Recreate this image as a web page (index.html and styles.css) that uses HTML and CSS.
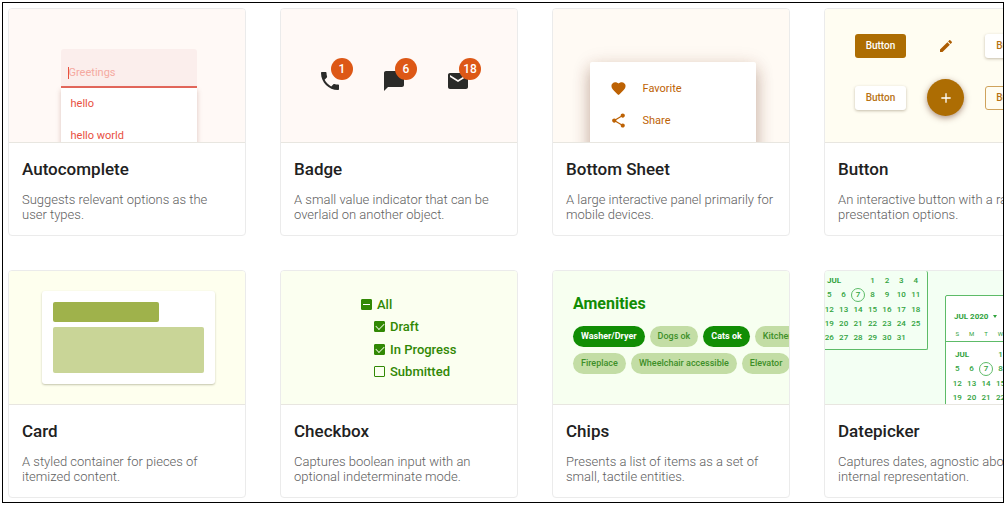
FILE: index.html
```html
<!DOCTYPE html>
<html lang="en">
<head>
<meta charset="utf-8">
<title>Components</title>
<link rel="stylesheet" href="styles.css">
</head>
<body>
<main class="frame">
  <article class="card">
    <div class="preview preview-autocomplete">
      <div class="combo">
        <div class="combo-field"><span class="caret"></span><input class="combo-input" type="text" placeholder="Greetings" aria-label="Greetings"></div>
        <ul class="combo-list"><li>hello</li><li>hello world</li></ul>
      </div>
    </div>
    <div class="info"><h2>Autocomplete</h2><p>Suggests relevant options as the user types.</p></div>
  </article>

  <article class="card">
    <div class="preview preview-badge">
      <span class="badged"><svg viewBox="0 0 24 24"><path d="M6.62 10.79c1.44 2.83 3.76 5.14 6.59 6.59l2.2-2.2c.27-.27.67-.36 1.02-.24 1.12.37 2.33.57 3.57.57.55 0 1 .45 1 1V20c0 .55-.45 1-1 1-9.39 0-17-7.61-17-17 0-.55.45-1 1-1h3.5c.55 0 1 .45 1 1 0 1.25.2 2.45.57 3.57.11.35.03.74-.25 1.02l-2.2 2.2z"/></svg><span class="badge">1</span></span>
      <span class="badged"><svg viewBox="0 0 24 24"><path d="M20 2H4c-1.1 0-2 .9-2 2v18l4-4h14c1.1 0 2-.9 2-2V4c0-1.1-.9-2-2-2z"/></svg><span class="badge">6</span></span>
      <span class="badged"><svg viewBox="0 0 24 24"><path d="M20 4H4c-1.1 0-1.99.9-1.99 2L2 18c0 1.1.9 2 2 2h16c1.1 0 2-.9 2-2V6c0-1.1-.9-2-2-2zm0 4l-8 5-8-5V6l8 5 8-5v2z"/></svg><span class="badge">18</span></span>
    </div>
    <div class="info"><h2>Badge</h2><p>A small value indicator that can be overlaid on another object.</p></div>
  </article>

  <article class="card">
    <div class="preview preview-sheet">
      <ul class="sheet">
        <li><svg viewBox="0 0 24 24"><path d="M12 21.35l-1.45-1.32C5.4 15.36 2 12.28 2 8.5 2 5.42 4.42 3 7.5 3c1.74 0 3.41.81 4.5 2.09C13.09 3.81 14.76 3 16.5 3 19.58 3 22 5.42 22 8.5c0 3.78-3.4 6.86-8.55 11.54L12 21.35z"/></svg>Favorite</li>
        <li><svg viewBox="0 0 24 24"><path d="M18 16.08c-.76 0-1.44.3-1.96.77L8.91 12.7c.05-.23.09-.46.09-.7s-.04-.47-.09-.7l7.05-4.11c.54.5 1.25.81 2.04.81 1.66 0 3-1.34 3-3s-1.34-3-3-3-3 1.34-3 3c0 .24.04.47.09.7L8.04 9.81C7.5 9.31 6.79 9 6 9c-1.66 0-3 1.34-3 3s1.34 3 3 3c.79 0 1.5-.31 2.04-.81l7.12 4.16c-.05.21-.08.43-.08.65 0 1.61 1.31 2.92 2.92 2.92s2.92-1.31 2.92-2.92-1.31-2.92-2.92-2.92z"/></svg>Share</li>
      </ul>
    </div>
    <div class="info"><h2>Bottom Sheet</h2><p>A large interactive panel primarily for mobile devices.</p></div>
  </article>

  <article class="card">
    <div class="preview preview-button">
      <button class="btn btn-filled" type="button">Button</button>
      <button class="btn-icon" type="button" aria-label="Edit"><svg viewBox="0 0 24 24"><path d="M3 17.25V21h3.75L17.81 9.94l-3.75-3.75L3 17.25zM20.71 7.04c.39-.39.39-1.02 0-1.41l-2.34-2.34c-.39-.39-1.02-.39-1.41 0l-1.83 1.83 3.75 3.75 1.83-1.83z"/></svg></button>
      <button class="btn btn-raised" type="button">Button</button>
      <button class="btn btn-raised" type="button">Button</button>
      <button class="fab" type="button" aria-label="Add"><svg viewBox="0 0 24 24"><path d="M19 13h-6v6h-2v-6H5v-2h6V5h2v6h6v2z"/></svg></button>
      <button class="btn btn-outlined" type="button">Button</button>
    </div>
    <div class="info"><h2>Button</h2><p>An interactive button with a range of presentation options.</p></div>
  </article>

  <article class="card">
    <div class="preview preview-card">
      <div class="sample"><div class="sample-title"></div><div class="sample-body"></div></div>
    </div>
    <div class="info"><h2>Card</h2><p>A styled container for pieces of itemized content.</p></div>
  </article>

  <article class="card">
    <div class="preview preview-checkbox">
      <div class="checks">
        <label class="check"><input class="mixed" type="checkbox">All</label>
        <label class="check nested"><input type="checkbox" checked>Draft</label>
        <label class="check nested"><input type="checkbox" checked>In Progress</label>
        <label class="check nested"><input type="checkbox">Submitted</label>
      </div>
    </div>
    <div class="info"><h2>Checkbox</h2><p>Captures boolean input with an optional indeterminate mode.</p></div>
  </article>

  <article class="card">
    <div class="preview preview-chips">
      <h3>Amenities</h3>
      <div class="chips"><span class="chip on">Washer/Dryer</span><span class="chip">Dogs ok</span><span class="chip on">Cats ok</span><span class="chip">Kitchen</span></div>
      <div class="chips"><span class="chip">Fireplace</span><span class="chip">Wheelchair accessible</span><span class="chip">Elevator</span></div>
    </div>
    <div class="info"><h2>Chips</h2><p>Presents a list of items as a set of small, tactile entities.</p></div>
  </article>

  <article class="card">
    <div class="preview preview-date">
      <div class="calendar calendar-back">
        <table class="days">
          <tr><th colspan="2">JUL</th><td></td><td>1</td><td>2</td><td>3</td><td>4</td></tr>
          <tr><td>5</td><td>6</td><td><span class="today">7</span></td><td>8</td><td>9</td><td>10</td><td>11</td></tr>
          <tr><td>12</td><td>13</td><td>14</td><td>15</td><td>16</td><td>17</td><td>18</td></tr>
          <tr><td>19</td><td>20</td><td>21</td><td>22</td><td>23</td><td>24</td><td>25</td></tr>
          <tr><td>26</td><td>27</td><td>28</td><td>29</td><td>30</td><td>31</td><td></td></tr>
        </table>
      </div>
      <div class="calendar calendar-front">
        <button class="period" type="button">JUL 2020<span class="arrow"></span></button>
        <div class="weekdays"><span>S</span><span>M</span><span>T</span><span>W</span><span>T</span><span>F</span><span>S</span></div>
        <table class="days">
          <tr><th colspan="2">JUL</th><td></td><td>1</td><td>2</td><td>3</td><td>4</td></tr>
          <tr><td>5</td><td>6</td><td><span class="today">7</span></td><td>8</td><td>9</td><td>10</td><td>11</td></tr>
          <tr><td>12</td><td>13</td><td>14</td><td>15</td><td>16</td><td>17</td><td>18</td></tr>
          <tr><td>19</td><td>20</td><td>21</td><td>22</td><td>23</td><td>24</td><td>25</td></tr>
          <tr><td>26</td><td>27</td><td>28</td><td>29</td><td>30</td><td>31</td><td></td></tr>
        </table>
      </div>
    </div>
    <div class="info"><h2>Datepicker</h2><p>Captures dates, agnostic about their internal representation.</p></div>
  </article>
</main>
</body>
</html>
```

FILE: styles.css
```css
* { box-sizing: border-box; }
body { margin: 2px; background: #fff; font-family: Roboto, "Liberation Sans", sans-serif; }
h2, h3, p, ul { margin: 0; padding: 0; }
ul { list-style: none; }
button, input { font-family: inherit; margin: 0; }
svg { display: block; fill: currentColor; }

.frame {
  display: grid;
  grid-template-columns: repeat(4, 238px);
  gap: 34px;
  padding: 5px 5px 4px;
  border: 1px solid #000;
  overflow: hidden;
}
.card { border: 1px solid #ebebeb; border-radius: 4px; overflow: hidden; }
.preview { height: 134px; border-bottom: 1px solid #e8e6e0; overflow: hidden; }
.info { padding: 16px 13px 13px; }
.info h2 { font-size: 17px; line-height: 20px; font-weight: 500; color: #212121; }
.info p { margin-top: 13px; font-size: 13px; line-height: 15px; font-weight: 300; color: #606060; }

/* Autocomplete */
.preview-autocomplete { display: flex; justify-content: center; padding: 40px 0 0 3px; background: #fff9f6; color: #e8503f; }
.combo { width: 136px; }
.combo-field { display: flex; align-items: center; height: 39px; padding: 10px 7px 0; background: #fbeeec; border-bottom: 2px solid #e5695d; border-radius: 3px 3px 0 0; }
.caret { width: 1px; height: 12px; background: #e8503f; }
.combo-input { flex: 1; min-width: 0; padding: 0; border: 0; outline: 0; background: none; font-size: 11px; color: #e8503f; }
.combo-input::placeholder { color: #f5aaa1; opacity: 1; }
.combo-list { height: 70px; padding: 0 10px; background: #fff; box-shadow: 0 2px 5px rgba(120, 40, 20, .25); font-size: 11px; line-height: 32px; }

/* Badge */
.preview-badge { display: flex; justify-content: center; align-items: center; gap: 40px; padding: 11px 10px 0 0; background: #fff9f6; color: #2b2b29; }
.badged { position: relative; }
.badged svg { width: 24px; height: 24px; }
.badge { position: absolute; left: 13px; top: -11px; width: 22px; height: 22px; border-radius: 50%; background: #dd5816; color: #fff; font-size: 12px; line-height: 22px; font-weight: 500; text-align: center; }

/* Bottom sheet */
.preview-sheet { display: flex; justify-content: center; padding: 53px 0 0 3px; background: #fffaf4; color: #bd6204; }
.sheet { width: 166px; height: 100px; padding: 10px 20px; background: #fff; border-radius: 2px; box-shadow: 0 8px 16px rgba(90, 40, 20, .3), 0 2px 20px rgba(120, 50, 20, .12); font-size: 11px; }
.sheet li { display: flex; align-items: center; gap: 16px; height: 32px; }
.sheet svg { width: 17px; height: 17px; }

/* Buttons */
.preview-button { display: grid; grid-template-columns: 51px 37px 52px; grid-auto-rows: 37px; gap: 15px 21px; align-items: center; padding: 18px 30px; background: #fffdf2; color: #ad6d03; }
.btn { height: 24px; padding: 0; border: 0; border-radius: 3px; background: #fff; color: #b87214; font-size: 10px; font-weight: 500; }
.btn-filled { background: #ad6d03; color: #fff; }
.btn-raised { box-shadow: 0 1px 3px rgba(60, 40, 0, .3); }
.btn-outlined { border: 1px solid #cfa35c; background: none; }
.btn-icon { display: flex; justify-content: center; padding: 0; border: 0; background: none; color: #ad5d03; }
.btn-icon svg { width: 16px; height: 16px; }
.fab { display: flex; justify-content: center; align-items: center; height: 37px; padding: 0; border: 0; border-radius: 50%; background: #ad6d03; color: #fff; box-shadow: 0 2px 6px rgba(90, 40, 20, .5); }
.fab svg { width: 16px; height: 16px; }

/* Card */
.preview-card { display: flex; justify-content: center; align-items: center; padding-left: 3px; background: #feffee; }
.sample { display: flex; flex-direction: column; gap: 5px; width: 173px; padding: 11px; border-radius: 3px; background: #fff; box-shadow: 0 1px 2px rgba(60, 60, 20, .3); }
.sample-title { width: 106px; height: 20px; border-radius: 2px; background: #9fb24b; }
.sample-body { height: 46px; border-radius: 2px; background: #c9d597; }

/* Checkbox */
.preview-checkbox { padding: 22px 80px; background: #fbfff0; color: #318804; }
.checks { display: grid; grid-template-rows: repeat(4, 1fr); height: 90px; }
.check { display: flex; align-items: center; gap: 5px; font-size: 13px; font-weight: 500; white-space: nowrap; }
.nested { padding-left: 13px; }
.check input { display: flex; justify-content: center; align-items: center; appearance: none; width: 11px; height: 11px; border: 1px solid #318804; border-radius: 1px; }
.check .mixed, .check input:checked { background: #318804; }
.mixed::after { content: ""; width: 7px; height: 1px; background: #fff; }
.check input:checked::after { content: ""; width: 7px; height: 4px; margin-bottom: 2px; border: solid #dff0d0; border-width: 0 0 1px 1px; transform: rotate(-45deg); }

/* Chips */
.preview-chips { padding: 22px 0 0 20px; background: #f7fff0; color: #128c04; }
.preview-chips h3 { font-size: 16px; line-height: 22px; font-weight: 700; }
.chips { display: flex; gap: 5px; margin-top: 11px; }
.chips + .chips { margin-top: 6px; }
.chip { flex: none; padding: 0 8px; border-radius: 11px; background: #c3dda5; color: #3d8f28; font-size: 9px; line-height: 21px; font-weight: 500; }
.chip.on { background: #118d04; color: #fff; font-weight: 700; }

/* Datepicker */
.preview-date { display: flex; align-items: flex-start; gap: 17px; background: #f3fff3; color: #2fa23c; }
.calendar { flex: none; border: 1px solid #5dbb68; border-radius: 2px; font-size: 8px; }
.calendar-back { margin-left: -8px; border-top: 0; padding: 2px 4px 4px; }
.calendar-front { margin-top: 24px; padding-top: 12px; background: #fff; }
.calendar-front .days { margin: 5px 4px 0; }
.days { table-layout: fixed; width: 101px; height: 72px; border-collapse: collapse; line-height: 9px; font-weight: 500; }
.days td { padding: 0; text-align: center; }
.days th { padding: 0 0 0 5px; text-align: left; font-weight: 700; }
.today { display: block; width: 14px; height: 14px; margin: -2px auto; border: 1px solid #5dbb68; border-radius: 50%; line-height: 12px; }
.period { display: flex; align-items: center; gap: 5px; height: 16px; padding: 0 8px; border: 0; background: none; color: inherit; font-size: 8px; font-weight: 700; }
.arrow { border: 2px solid transparent; border-top: 3px solid currentColor; border-bottom: 0; }
.weekdays { display: grid; grid-template-columns: repeat(7, 1fr); height: 18px; padding: 0 4px; border-bottom: 1px solid #5dbb68; font-size: 6px; line-height: 20px; text-align: center; }
```
